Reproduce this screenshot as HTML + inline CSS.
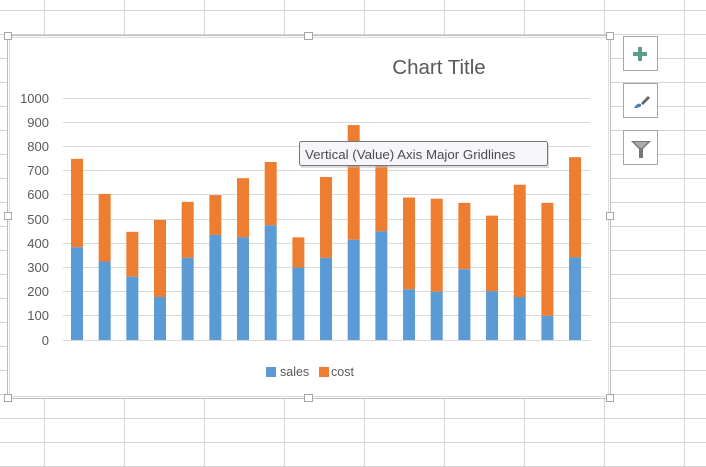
<!DOCTYPE html>
<html><head><meta charset="utf-8"><style>
html,body{margin:0;padding:0;width:706px;height:467px;overflow:hidden;background:#fff;font-family:"Liberation Sans",sans-serif}
</style></head><body>
<svg width="706" height="467" xmlns="http://www.w3.org/2000/svg" font-family="Liberation Sans, sans-serif">
<g stroke="#d4d4d4" stroke-width="1">
<line x1="0" y1="10.5" x2="706" y2="10.5"/>
<line x1="44.5" y1="0" x2="44.5" y2="467"/><line x1="124.5" y1="0" x2="124.5" y2="467"/><line x1="204.5" y1="0" x2="204.5" y2="467"/><line x1="284.5" y1="0" x2="284.5" y2="467"/><line x1="364.5" y1="0" x2="364.5" y2="467"/><line x1="444.5" y1="0" x2="444.5" y2="467"/><line x1="524.5" y1="0" x2="524.5" y2="467"/><line x1="604.5" y1="0" x2="604.5" y2="467"/><line x1="684.5" y1="0" x2="684.5" y2="467"/>
<line x1="0" y1="34.5" x2="706" y2="34.5"/><line x1="0" y1="58.5" x2="706" y2="58.5"/><line x1="0" y1="82.5" x2="706" y2="82.5"/><line x1="0" y1="106.5" x2="706" y2="106.5"/><line x1="0" y1="130.5" x2="706" y2="130.5"/><line x1="0" y1="154.5" x2="706" y2="154.5"/><line x1="0" y1="178.5" x2="706" y2="178.5"/><line x1="0" y1="202.5" x2="706" y2="202.5"/><line x1="0" y1="226.5" x2="706" y2="226.5"/><line x1="0" y1="250.5" x2="706" y2="250.5"/><line x1="0" y1="274.5" x2="706" y2="274.5"/><line x1="0" y1="298.5" x2="706" y2="298.5"/><line x1="0" y1="322.5" x2="706" y2="322.5"/><line x1="0" y1="346.5" x2="706" y2="346.5"/><line x1="0" y1="370.5" x2="706" y2="370.5"/><line x1="0" y1="394.5" x2="706" y2="394.5"/><line x1="0" y1="418.5" x2="706" y2="418.5"/><line x1="0" y1="442.5" x2="706" y2="442.5"/><line x1="0" y1="466.5" x2="706" y2="466.5"/>
</g>
<rect x="7.5" y="35.5" width="603" height="363" fill="#fff" stroke="#bdbdbd"/>
<rect x="9.5" y="37.5" width="599" height="359" fill="#fff" stroke="#dcdcdc"/>
<g fill="#fff" stroke="#a6a6a6">
<rect x="4.5" y="32.5" width="7" height="7"/><rect x="304.5" y="32.5" width="8" height="7"/><rect x="606.5" y="32.5" width="7" height="7"/>
<rect x="4.5" y="212.5" width="7" height="7"/><rect x="606.5" y="212.5" width="7" height="7"/>
<rect x="4.5" y="394.5" width="7" height="7"/><rect x="304.5" y="394.5" width="8" height="7"/><rect x="606.5" y="394.5" width="7" height="7"/>
</g>
<text x="439" y="74" font-size="20.5" fill="#595959" text-anchor="middle">Chart Title</text>
<g stroke="#d9d9d9">
<line x1="63" y1="98.5" x2="590" y2="98.5"/><line x1="63" y1="122.5" x2="590" y2="122.5"/><line x1="63" y1="146.5" x2="590" y2="146.5"/><line x1="63" y1="170.5" x2="590" y2="170.5"/><line x1="63" y1="194.5" x2="590" y2="194.5"/><line x1="63" y1="219.5" x2="590" y2="219.5"/><line x1="63" y1="243.5" x2="590" y2="243.5"/><line x1="63" y1="267.5" x2="590" y2="267.5"/><line x1="63" y1="291.5" x2="590" y2="291.5"/><line x1="63" y1="315.5" x2="590" y2="315.5"/><line x1="63" y1="340.5" x2="590" y2="340.5"/>
</g>
<g font-size="13" fill="#595959" text-anchor="end">
<text x="49" y="103">1000</text><text x="49" y="127">900</text><text x="49" y="151">800</text><text x="49" y="175">700</text><text x="49" y="199">600</text><text x="49" y="224">500</text><text x="49" y="248">400</text><text x="49" y="272">300</text><text x="49" y="296">200</text><text x="49" y="320">100</text><text x="49" y="345">0</text>
</g>
<g id="bars"></g>
<rect x="266" y="367" width="10" height="10" fill="#5b9bd5"/>
<text x="280" y="376" font-size="12.5" fill="#595959">sales</text>
<rect x="319" y="367" width="10" height="10" fill="#ed7d31"/>
<text x="331" y="376" font-size="12.5" fill="#595959">cost</text>
<rect x="301" y="144" width="248" height="24" fill="#bbb" opacity="0.5"/>
<rect x="299.5" y="141.5" width="248" height="24" rx="2" fill="#f6f6fa" stroke="#767676"/>
<text x="305" y="159" font-size="13.3" fill="#4c4c4c">Vertical (Value) Axis Major Gridlines</text>
<g fill="#fff" stroke="#a6a6a6">
<rect x="623.5" y="36.5" width="34" height="34"/><rect x="623.5" y="83.5" width="34" height="34"/><rect x="623.5" y="130.5" width="34" height="34"/>
</g>
<path d="M638 47h4v5h5v4h-5v5h-4v-5h-5v-4h5z" fill="#5e9e86"/>
<path d="M634 108c2-4 5-5 7-4 1 2-1 4-7 4z" fill="#4a7fc1"/>
<path d="M641 103l7-7 2 2-7 7z" fill="#666"/>
<path d="M631 141h20l-8 8v9h-4v-9z" fill="#777"/>
<path d="M634 142h14l-6 6h-2z" fill="#aaa"/>
</svg>
<script>
var d=[[384,750],[325,605],[262,448],[178,497],[340,572],[435,600],[425,670],[475,737],[300,425],[340,675],[415,890],[450,760],[210,590],[200,585],[293,568],[202,515],[178,643],[100,568],[342,757]];
var g=document.getElementById('bars'),s='';
d.forEach(function(v,i){var x=71+i*27.67,k=0.2415;
s+='<rect x="'+x+'" y="'+(340-v[1]*k)+'" width="12" height="'+((v[1]-v[0])*k)+'" fill="#ed7d31"/>';
s+='<rect x="'+x+'" y="'+(340-v[0]*k)+'" width="12" height="'+(v[0]*k)+'" fill="#5b9bd5"/>';});
g.innerHTML=s;
</script>
</body></html>
